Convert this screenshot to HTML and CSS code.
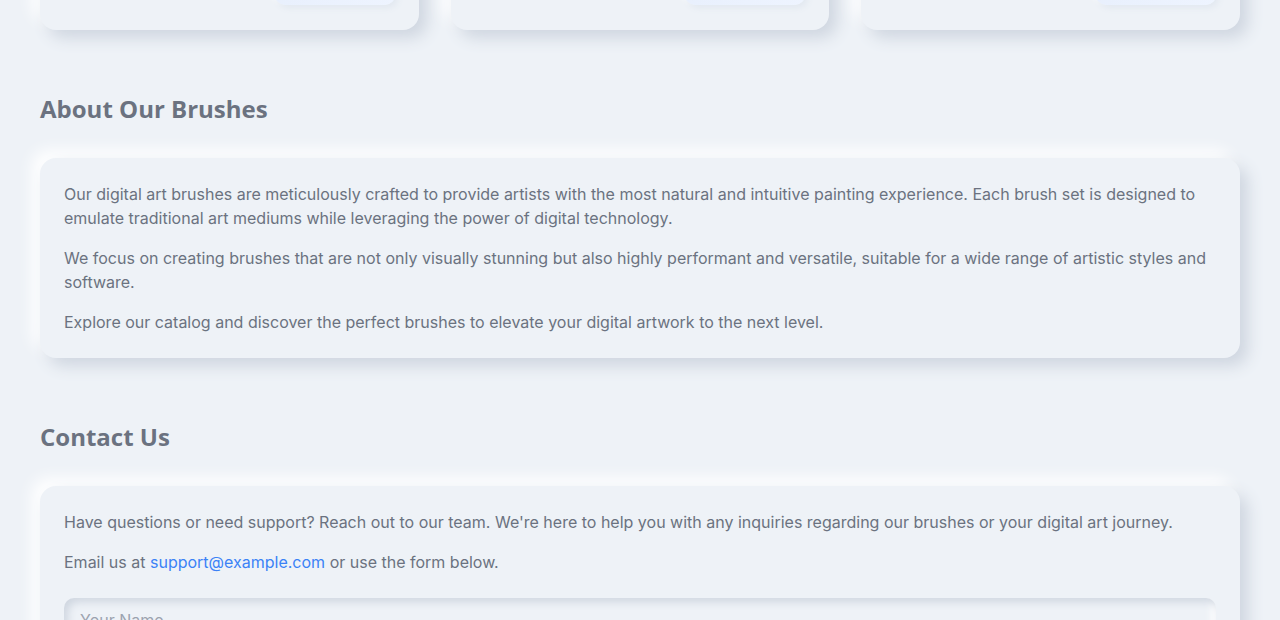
FILE: index.html
```html
<!DOCTYPE html>
<html lang="en">
<head>
<meta charset="utf-8">
<title>Digital Art Brushes</title>
<link rel="stylesheet" href="styles.css">
</head>
<body>
<main class="page">
  <section class="catalog">
    <article class="product">
      <h3 class="product-title">Watercolor Essentials</h3>
      <p class="product-desc">Soft, bleeding washes and granulating textures.</p>
      <div class="product-footer">
        <span class="price">$19.99</span>
        <button class="btn-buy">Add to Cart</button>
      </div>
    </article>
    <article class="product">
      <h3 class="product-title">Oil Paint Pro</h3>
      <p class="product-desc">Thick impasto strokes with rich blending.</p>
      <div class="product-footer">
        <span class="price">$24.99</span>
        <button class="btn-buy">Add to Cart</button>
      </div>
    </article>
    <article class="product">
      <h3 class="product-title">Sketching Pencils</h3>
      <p class="product-desc">Graphite and charcoal with natural grain.</p>
      <div class="product-footer">
        <span class="price">$14.99</span>
        <button class="btn-buy">Add to Cart</button>
      </div>
    </article>
  </section>

  <section class="block">
    <h2 class="block-title">About Our Brushes</h2>
    <div class="panel">
      <p>Our digital art brushes are meticulously crafted to provide artists with the most natural and intuitive painting experience. Each brush set is designed to emulate traditional art mediums while leveraging the power of digital technology.</p>
      <p>We focus on creating brushes that are not only visually stunning but also highly performant and versatile, suitable for a wide range of artistic styles and software.</p>
      <p>Explore our catalog and discover the perfect brushes to elevate your digital artwork to the next level.</p>
    </div>
  </section>

  <section class="block">
    <h2 class="block-title">Contact Us</h2>
    <div class="panel">
      <p>Have questions or need support? Reach out to our team. We're here to help you with any inquiries regarding our brushes or your digital art journey.</p>
      <p>Email us at <a href="#" class="link">support@example.com</a> or use the form below.</p>
      <form class="form">
        <input class="field" type="text" placeholder="Your Name">
        <input class="field" type="email" placeholder="Your Email">
      </form>
    </div>
  </section>
</main>
</body>
</html>
```

FILE: styles.css
```css
* { box-sizing: border-box; }

html, body {
  margin: 0;
  background: #eef2f7;
}

body {
  font-family: Inter, "Liberation Sans", sans-serif;
  font-size: 16px;
  line-height: 24px;
  color: #6b7280;
}

.page {
  padding: 0 40px 40px;
}

.catalog {
  display: grid;
  grid-template-columns: repeat(3, 1fr);
  gap: 32px;
  margin-top: -270px;
}

.product {
  height: 300px;
  padding: 24px;
  border-radius: 16px;
  background: #eef2f7;
  box-shadow: 8px 8px 16px #cfd6e0, -8px -8px 16px #ffffff;
  display: flex;
  flex-direction: column;
}

.product-title {
  margin: 0 0 8px;
  font-size: 20px;
  color: #4b5563;
}

.product-desc {
  margin: 0;
  flex: 1;
}

.product-footer {
  display: flex;
  justify-content: space-between;
  align-items: center;
}

.price {
  font-weight: 600;
  color: #3b82f6;
}

.btn-buy {
  width: 120px;
  height: 40px;
  margin-bottom: 1px;
  border: none;
  border-radius: 10px;
  background: linear-gradient(145deg, #e6eefc, #eef4ff);
  color: #3b82f6;
  font: inherit;
  box-shadow: 3px 3px 6px #e2e8f0, -3px -3px 6px #ffffff;
}

.block {
  margin-top: 62px;
}

.block-title {
  margin: 0 0 32px;
  font-family: "Open Sans", "Liberation Sans", sans-serif;
  font-weight: 700;
  font-size: 24px;
  line-height: 34px;
  color: #6b7280;
}

.panel {
  padding: 24px;
  border-radius: 16px;
  background: #eef2f7;
  box-shadow: 8px 8px 16px #cfd6e0, -8px -8px 16px #ffffff;
}

.panel p {
  margin: 0 0 16px;
}

.panel p:last-child {
  margin-bottom: 0;
}

.link {
  color: #3b82f6;
  text-decoration: none;
}

.form {
  margin-top: 24px;
  display: flex;
  flex-direction: column;
  gap: 16px;
}

.field {
  width: 100%;
  height: 44px;
  padding: 0 16px;
  border: none;
  border-radius: 10px;
  background: #eef2f7;
  font: inherit;
  color: #4b5563;
  box-shadow: inset 4px 4px 8px #cfd6e0, inset -4px -4px 8px #ffffff;
  outline: none;
}

.field::placeholder {
  color: #9ca3af;
}
```
